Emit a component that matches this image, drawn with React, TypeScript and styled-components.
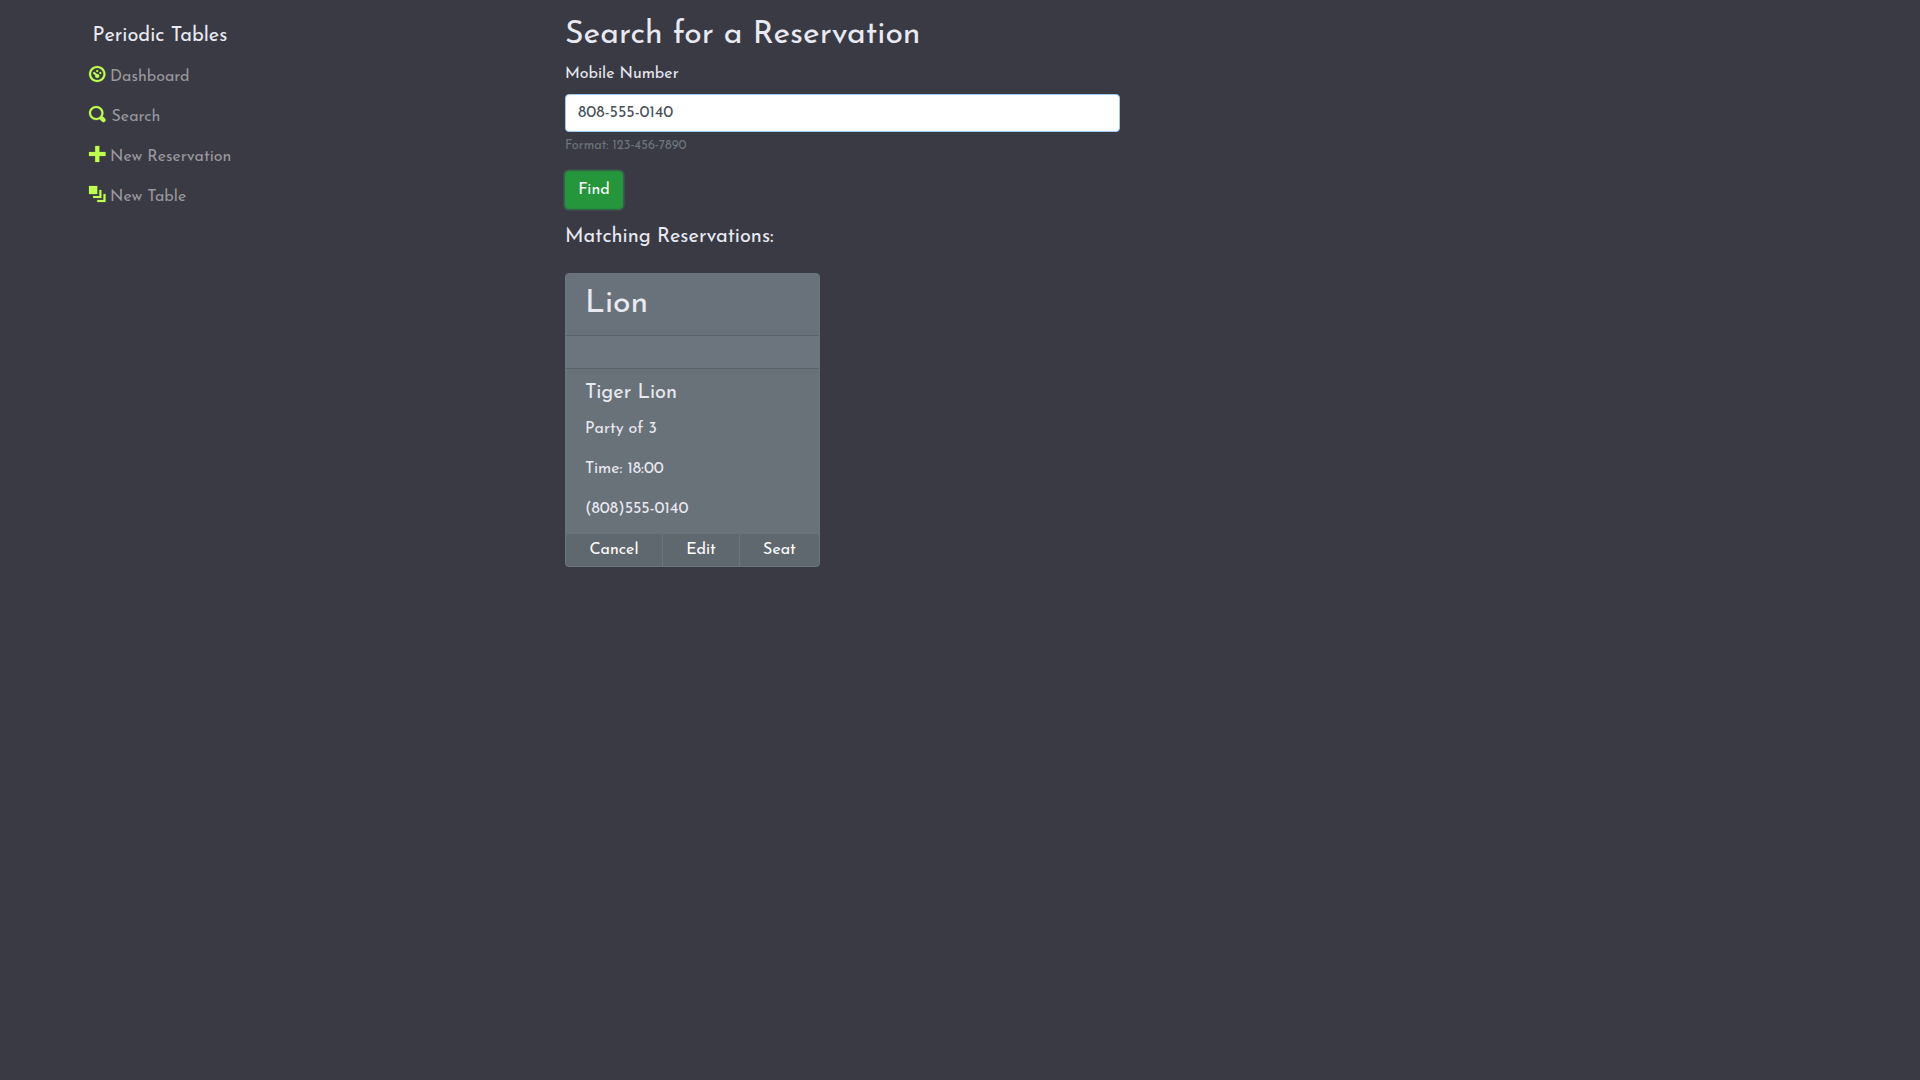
import React, { useState } from 'react';
import styled, { createGlobalStyle } from 'styled-components';

const GlobalStyle = createGlobalStyle`
  *, *::before, *::after { box-sizing: border-box; }
  body {
    margin: 0;
    background: #3a3a44;
    color: #e9e9f2;
    font: 400 16px/24px "Josefin Sans", Lato, sans-serif;
  }
`;

const Page = styled.div`
  display: flex;
  min-height: 100vh;
`;

const Sidebar = styled.nav`
  flex: 0 0 565px;
  padding: 24px 0 0 88.5px;
`;

const Brand = styled.div`
  margin: 0 0 7px 4px;
  font-size: 20px;
`;

const NavList = styled.ul`
  margin: 0;
  padding: 0;
  list-style: none;
`;

const NavItem = styled.li<{ $gap: number }>`
  display: flex;
  align-items: flex-start;
  gap: ${(p) => p.$gap}px;
  height: 40px;
  padding-top: 10px;
  color: #99999e;
`;

const Icon = styled.svg`
  width: 16.5px;
  height: 16px;
  margin-top: 1px;
  overflow: visible;
  fill: #bfff50;
  stroke: #bfff50;
  stroke-width: 0.1;
`;

const Main = styled.main`
  width: 555px;
  padding-top: 16px;
`;

const Title = styled.h1`
  margin: 0 0 8px;
  font-size: 32px;
  font-weight: 400;
  line-height: 38px;
`;

const Form = styled.form`
  display: flex;
  flex-direction: column;
  align-items: flex-start;
`;

const Label = styled.label`
  margin-bottom: 8px;
`;

const Input = styled.input`
  width: 100%;
  height: 38px;
  padding: 6px 12px;
  border: 1px solid #9fc9f3;
  border-radius: 4px;
  outline: none;
  background: #fff;
  color: #495057;
  font: inherit;
`;

const Hint = styled.small`
  margin-top: 4px;
  color: #6c757d;
  font-size: 12.8px;
  line-height: 19px;
`;

const FindButton = styled.button`
  width: 58px;
  height: 38px;
  margin-top: 16px;
  padding: 6px 0;
  border: 1px solid #23923d;
  border-radius: 4px;
  background: #26963d;
  box-shadow: 0 0 0 1.6px #38614b;
  color: #fff;
  font: inherit;
`;

const ResultsHeading = styled.h2`
  margin: 16px 0 24px;
  font-size: 20px;
  font-weight: 400;
  line-height: 24px;
`;

const Card = styled.article`
  display: flex;
  flex-direction: column;
  width: 255px;
  height: 294px;
  border: 1px solid #6c757d;
  border-radius: 4px;
  overflow: hidden;
  background: #6c757d;
`;

const CardHeader = styled.header`
  flex: none;
  height: 62px;
  padding: 11px 19px 0;
  border-bottom: 1px solid #5a616b;
  background: #69727a;
  font-size: 32px;
  line-height: 38px;
`;

const CardStatus = styled.div`
  flex: none;
  height: 33px;
  border-bottom: 1px solid #5a616b;
`;

const CardBody = styled.div`
  flex: 1;
  padding: 12px 19px 0;
  background: #697279;
`;

const GuestName = styled.h3`
  margin: 0 0 12px;
  font-size: 20px;
  font-weight: 400;
  line-height: 24px;
`;

const Detail = styled.p`
  margin: 0 0 16px;

  &:last-child { margin-bottom: 0; }
`;

const Actions = styled.div`
  display: grid;
  flex: none;
  grid-template-columns: 96px 76px 79px;
  gap: 1px;
  height: 32px;
`;

const Action = styled.button`
  padding: 4px 0;
  border: 0;
  background: #5f686f;
  color: #fff;
  font: inherit;

  &:first-child { border-top-left-radius: 3px; border-bottom-left-radius: 3px; }
  &:last-child { border-top-right-radius: 3px; border-bottom-right-radius: 3px; }
`;

const links = [
  {
    text: 'Dashboard', gap: 5,
    d: 'M4 0c-2.2 0-4 1.8-4 4s1.8 4 4 4 4-1.8 4-4-1.8-4-4-4zm0 1c1.66 0 3 1.34 3 3s-1.34 3-3 3-3-1.34-3-3 1.34-3 3-3zm0 1c-.28 0-.5.22-.5.5s.22.5.5.5.5-.22.5-.5-.22-.5-.5-.5zm-1.66 1a.5.5 0 0 0-.19.84l.91.91c-.02.08-.06.16-.06.25 0 .55.45 1 1 1s1-.45 1-1-.45-1-1-1c-.09 0-.17.04-.25.06l-.91-.91a.5.5 0 0 0-.5-.15zm3.16 0c-.28 0-.5.22-.5.5s.22.5.5.5.5-.22.5-.5-.22-.5-.5-.5z',
  },
  {
    text: 'Search', gap: 6.5,
    d: 'M3.5 0c-1.93 0-3.5 1.57-3.5 3.5s1.57 3.5 3.5 3.5c.59 0 1.17-.14 1.66-.41a1 1 0 0 0 .13.13l1 1a1.02 1.02 0 1 0 1.44-1.44l-1-1a1 1 0 0 0-.16-.13c.27-.49.44-1.06.44-1.66 0-1.93-1.55-3.5-3.5-3.5zm0 1c1.39 0 2.5 1.11 2.5 2.5 0 .66-.24 1.27-.66 1.72l-.03.03a1 1 0 0 0-.13.13c-.44.4-1.04.63-1.69.63-1.39 0-2.5-1.11-2.5-2.5s1.11-2.5 2.5-2.5z',
  },
  { text: 'New Reservation', gap: 5, d: 'M3 0v3h-3v2h3v3h2v-3h3v-2h-3v-3h-2z' },
  { text: 'New Table', gap: 5, d: 'M0 0v4h4v-4h-4zm5 2v3h-3v1h4v-4h-1zm2 2v3h-3v1h4v-4h-1z' },
];

const details = ['Party of 3', 'Time: 18:00', '(808)555-0140'];

export default function App() {
  const [mobile, setMobile] = useState('808-555-0140');

  return (
    <>
      <GlobalStyle />
      <Page>
        <Sidebar>
          <Brand>Periodic Tables</Brand>
          <NavList>
            {links.map((link) => (
              <NavItem key={link.text} $gap={link.gap}>
                <Icon viewBox="0 0 8 8" preserveAspectRatio="none">
                  <path d={link.d} />
                </Icon>
                <span>{link.text}</span>
              </NavItem>
            ))}
          </NavList>
        </Sidebar>
        <Main>
          <Title>Search for a Reservation</Title>
          <Form onSubmit={(e) => e.preventDefault()}>
            <Label htmlFor="mobile">Mobile Number</Label>
            <Input id="mobile" value={mobile} onChange={(e) => setMobile(e.target.value)} />
            <Hint>Format: 123-456-7890</Hint>
            <FindButton type="submit">Find</FindButton>
          </Form>
          <ResultsHeading>Matching Reservations:</ResultsHeading>
          <Card>
            <CardHeader>Lion</CardHeader>
            <CardStatus />
            <CardBody>
              <GuestName>Tiger Lion</GuestName>
              {details.map((text) => (
                <Detail key={text}>{text}</Detail>
              ))}
            </CardBody>
            <Actions>
              <Action>Cancel</Action>
              <Action>Edit</Action>
              <Action>Seat</Action>
            </Actions>
          </Card>
        </Main>
      </Page>
    </>
  );
}
